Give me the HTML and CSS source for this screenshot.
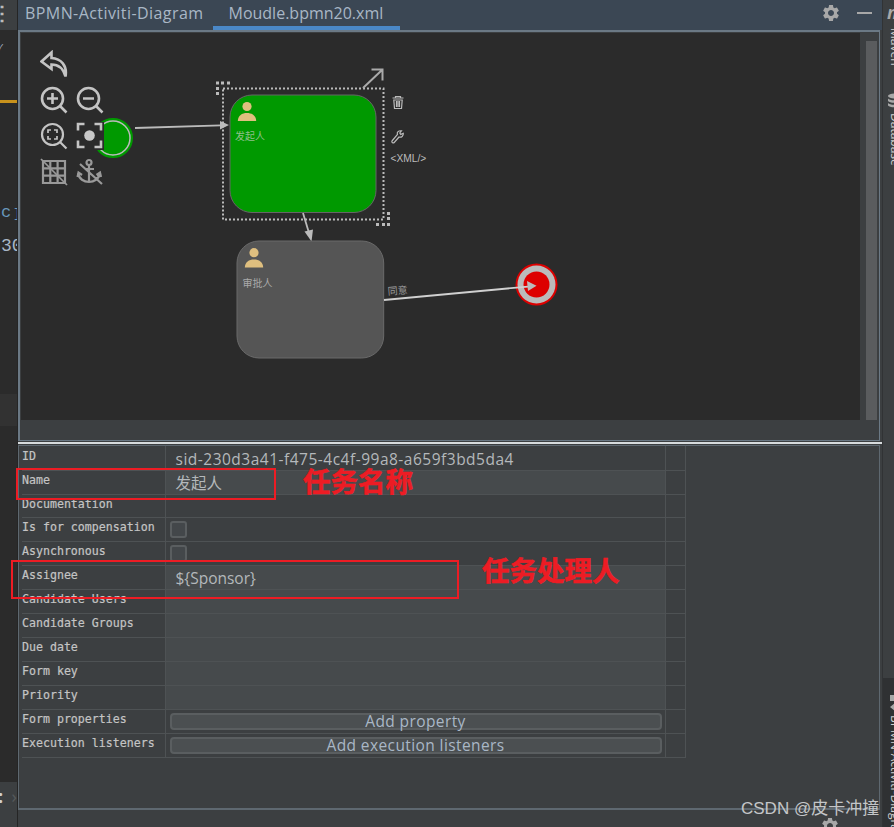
FILE: index.html
```html
<!DOCTYPE html>
<html lang="en">

<head>
    <meta charset="UTF-8">
    <meta name="viewport" content="width=device-width, initial-scale=1.0">
    <title>BPMN-Activiti-Diagram</title>
    <link rel="stylesheet" href="styles.css">
</head>

<body>
    <svg class="sprites" width="0" height="0">
        <symbol id="gear" viewBox="0 0 24 24">
            <path d="M19.14 12.94c.04-.3.06-.61.06-.94 0-.32-.02-.64-.07-.94l2.03-1.58c.18-.14.23-.41.12-.61l-1.92-3.32c-.12-.22-.37-.29-.59-.22l-2.39.96c-.5-.38-1.03-.7-1.62-.94L14.4 2.81c-.04-.24-.24-.41-.48-.41h-3.84c-.24 0-.43.17-.47.41L9.25 5.35c-.59.24-1.13.57-1.62.94l-2.39-.96c-.22-.08-.47 0-.59.22L2.74 8.87c-.12.21-.08.47.12.61l2.03 1.58c-.05.3-.09.63-.09.94s.02.64.07.94l-2.03 1.58c-.18.14-.23.41-.12.61l1.92 3.32c.12.22.37.29.59.22l2.39-.96c.5.38 1.03.7 1.62.94l.36 2.54c.05.24.24.41.48.41h3.84c.24 0 .44-.17.47-.41l.36-2.54c.59-.24 1.13-.56 1.62-.94l2.39.96c.22.08.47 0 .59-.22l1.92-3.32c.12-.22.07-.47-.12-.61l-2.01-1.58zM12 15.6c-1.98 0-3.6-1.62-3.6-3.6s1.62-3.6 3.6-3.6 3.6 1.62 3.6 3.6-1.62 3.6-3.6 3.6z" />
        </symbol>
    </svg>

    <div class="app">
        <!-- editor gutter behind the tool window -->
        <aside class="gutter">
            <div class="gutter-menu">⋮</div>
            <div class="gutter-check">✓</div>
            <div class="gutter-mark"></div>
            <div class="gutter-code gutter-c">c<span>]</span></div>
            <div class="gutter-code gutter-num">30</div>
            <div class="gutter-row"></div>
            <div class="gutter-foot"><b>:</b><i>›</i></div>
        </aside>

        <main class="tool-window">
            <div class="tabs">
                <div class="tab first">BPMN-Activiti-Diagram</div>
                <div class="tab active">Moudle.bpmn20.xml</div>
                <div class="tab-actions">
                    <svg class="gear" width="20" height="20"><use href="#gear" /></svg>
                    <span class="minimize"></span>
                </div>
            </div>

            <section class="canvas-panel">
                <div class="canvas-row">
                    <div class="canvas">
                        <svg class="diagram" viewBox="21 33 840 388" width="840" height="388">
                            <!-- start event -->
                            <circle cx="113" cy="138" r="19" fill="#009900" stroke="#009900" stroke-width="2" />
                            <circle cx="113" cy="138" r="17" fill="#009900" stroke="#bbbbbb" stroke-width="1.5" />
                            <path d="M135 128 L221 125.4" class="edge" />
                            <path d="M229 125 L220 121 L220 129.5 Z" class="head" />

                            <!-- first task -->
                            <rect x="230" y="95" width="146" height="117.5" rx="22" fill="#009900" stroke="#666666" />
                            <circle cx="247" cy="106.5" r="4.6" class="person" />
                            <path d="M237.8 121 C238 115.5 242 113 247 113 C252 113 256 115.5 256.2 121 Z" class="person" />
                            <text x="235" y="140" class="task-label on-green">发起人</text>

                            <!-- selection -->
                            <rect x="223" y="88.5" width="160.500" height="131" class="selection" />
                            <g class="handles">
                                <rect x="216" y="81.500" width="3" height="3" />
                                <rect x="221" y="81.500" width="3" height="3" />
                                <rect x="227" y="81.500" width="3" height="3" />
                                <rect x="216" y="87" width="3" height="3" />
                                <rect x="216" y="92" width="3" height="3" />
                                <rect x="387" y="212" width="3" height="3" />
                                <rect x="387" y="217" width="3" height="3" />
                                <rect x="387" y="223" width="3" height="3" />
                                <rect x="376" y="223" width="3" height="3" />
                                <rect x="382" y="223" width="3" height="3" />
                            </g>
                            <path d="M363 88 L382 70 M371.500 69.500 H382.500 V80.500" class="expand" />

                            <!-- trash -->
                            <g class="task-tool">
                                <path d="M392.500 98 H403.500 M395.500 98 V96.500 H400.500 V98 M393.800 100 L394.500 108.500 H401.500 L402.200 100 Z M396.500 101 V107 M398 101 V107 M399.500 101 V107" />
                            </g>
                            <!-- wrench -->
                            <g class="task-tool">
                                <path d="M392 141 L397.500 134.500 C396.500 132 398.500 130.500 401.500 130.800 L399.800 133 L400.800 134.400 L403.300 133.300 C403.500 136 401.500 137.700 399 137 L394 142.700 C393 143.500 391.200 142.200 392 141 Z" />
                            </g>
                            <text x="390.500" y="161.500" class="xml-label">&lt;XML/&gt;</text>

                            <path d="M303 213 L309 233" class="edge" />
                            <path d="M311.500 241.500 L304.500 231.500 L313 229.500 Z" class="head" />

                            <!-- second task -->
                            <rect x="237" y="241" width="146.700" height="117" rx="22" fill="#555555" stroke="#6a6a6a" />
                            <circle cx="254" cy="252.700" r="4.600" class="person" />
                            <path d="M244.800 267.500 C245 262 249 259.500 254 259.500 C259 259.500 263 262 263.200 267.500 Z" class="person" />
                            <text x="242.500" y="286.500" class="task-label">审批人</text>

                            <!-- end event -->
                            <circle cx="536.500" cy="284.500" r="21" fill="#dd0000" />
                            <circle cx="536.500" cy="284.500" r="19" fill="#bbbbbb" />
                            <circle cx="536.500" cy="284.500" r="13" fill="#dd0000" />
                            <path d="M384 300 L528 286.600" class="edge light" />
                            <path d="M536.500 285.800 L527 281 L528 291 Z" class="head" />
                            <text x="388" y="295" class="flow-label" transform="rotate(-5 388 295)">同意</text>
                        </svg>

                        <!-- diagram toolbar floats over the canvas -->
                        <div class="toolbar">
                            <svg class="tool" viewBox="0 0 28 28">
                                <path d="M11.500 2.500 L1.500 11.500 L11.500 19 V14.500 C18 14.500 23 17.500 25.500 26.500 C27.500 15.500 21 8.500 11.500 8 Z" />
                            </svg>
                            <span></span>
                            <svg class="tool" viewBox="0 0 28 28">
                                <circle cx="12.500" cy="12.500" r="10.500" />
                                <path d="M20 20 L26.500 26.500 M12.500 7 V18 M7 12.500 H18" />
                            </svg>
                            <svg class="tool" viewBox="0 0 28 28">
                                <circle cx="12.500" cy="12.500" r="10.500" />
                                <path d="M20 20 L26.500 26.500 M7 12.500 H18" />
                            </svg>
                            <svg class="tool" viewBox="0 0 28 28">
                                <circle class="mid" cx="12.500" cy="12.500" r="10.500" />
                                <path class="mid" d="M20 20 L26.500 26.500" />
                                <path class="thin" d="M8 11 V8 H11 M14 8 H17 V11 M17 14 V17 H14 M11 17 H8 V14" />
                            </svg>
                            <svg class="tool" viewBox="0 0 28 28">
                                <path d="M2 8.500 V2 H8.500 M18.500 2 H25 V8.500 M25 18.500 V25 H18.500 M8.500 25 H2 V18.500" />
                                <circle class="dot" cx="13.500" cy="13.500" r="5.300" />
                            </svg>
                            <svg class="tool tool-dim" viewBox="0 0 28 28">
                                <path class="mid" d="M3 3 H25 V25 H3 Z M3 10.300 H25 M3 17.600 H25 M10.300 3 V25 M17.600 3 V25" />
                                <path class="thin" d="M1 1 L27 27" />
                            </svg>
                            <svg class="tool tool-dim" viewBox="0 0 28 28">
                                <circle class="mid" cx="13" cy="4.500" r="2.500" />
                                <path class="mid" d="M13 7 V24 M8 11 H18 M2 15 C3 21 8 24 13 24 C18 24 23 21 24 15 M1.500 19 L2.500 14.500 L6 17 M20.500 17 L24 14.500 L25 19 M4 6 L26 26" />
                            </svg>
                        </div>
                    </div>
                    <div class="scrollbar"><div class="thumb"></div></div>
                </div>
                <div class="canvas-foot"></div>
            </section>

            <div class="divider"></div>

            <section class="props-panel">
                <table class="props">
                    <tr>
                        <th>ID</th>
                        <td class="value plain text id">sid-230d3a41-f475-4c4f-99a8-a659f3bd5da4</td>
                        <td class="tail"></td>
                    </tr>
                    <tr>
                        <th>Name</th>
                        <td class="value text">发起人</td>
                        <td class="tail"></td>
                    </tr>
                    <tr class="short">
                        <th>Documentation</th>
                        <td class="value plain"></td>
                        <td class="tail"></td>
                    </tr>
                    <tr>
                        <th>Is for compensation</th>
                        <td class="value plain"><span class="check"></span></td>
                        <td class="tail"></td>
                    </tr>
                    <tr>
                        <th>Asynchronous</th>
                        <td class="value plain"><span class="check"></span></td>
                        <td class="tail"></td>
                    </tr>
                    <tr>
                        <th>Assignee</th>
                        <td class="value text">${Sponsor}</td>
                        <td class="tail"></td>
                    </tr>
                    <tr>
                        <th>Candidate Users</th>
                        <td class="value"></td>
                        <td class="tail"></td>
                    </tr>
                    <tr>
                        <th>Candidate Groups</th>
                        <td class="value"></td>
                        <td class="tail"></td>
                    </tr>
                    <tr>
                        <th>Due date</th>
                        <td class="value"></td>
                        <td class="tail"></td>
                    </tr>
                    <tr>
                        <th>Form key</th>
                        <td class="value"></td>
                        <td class="tail"></td>
                    </tr>
                    <tr>
                        <th>Priority</th>
                        <td class="value"></td>
                        <td class="tail"></td>
                    </tr>
                    <tr>
                        <th>Form properties</th>
                        <td class="value plain"><button class="add-button">Add property</button></td>
                        <td class="tail"></td>
                    </tr>
                    <tr>
                        <th>Execution listeners</th>
                        <td class="value plain"><button class="add-button">Add execution listeners</button></td>
                        <td class="tail"></td>
                    </tr>
                </table>
            </section>

            <div class="footer">
                <svg class="gear" width="20" height="20"><use href="#gear" /></svg>
            </div>
        </main>

        <aside class="side-strip">
            <div class="side-top">
                <div class="side-m">m</div>
                <div class="side-text side-maven">Maven</div>
                <svg class="side-icon side-db" viewBox="0 0 16 16" width="16" height="16">
                    <ellipse cx="8" cy="3" rx="7" ry="2.500" />
                    <path d="M1 5.500 C3 8 13 8 15 5.500 V8 C13 10.500 3 10.500 1 8 Z M1 10 C3 12.500 13 12.500 15 10 V12.500 C13 15 3 15 1 12.500 Z" />
                </svg>
                <div class="side-text">Database</div>
            </div>
            <div class="side-bottom">
                <svg class="side-icon" viewBox="0 0 16 16" width="16" height="16">
                    <path d="M3 0 H13 V6 H3 Z M7 6 H9 V9 H7 Z M8 8 L13 12 L8 16 L3 12 Z" />
                </svg>
                <div class="side-text">BPMN-Activiti-Diagram</div>
            </div>
        </aside>

        <!-- hand drawn notes on top of the screenshot -->
        <div class="note-box note-box-name"></div>
        <div class="note-box note-box-assignee"></div>
        <div class="note note-name">任务名称</div>
        <div class="note note-assignee">任务处理人</div>
        <div class="watermark">CSDN @皮卡冲撞</div>
    </div>
</body>

</html>
```

FILE: styles.css
```css
* {
    margin: 0;
    padding: 0;
    box-sizing: border-box;
}

body {
    width: 894px;
    height: 827px;
    overflow: hidden;
    background: #3c3f41;
    color: #bbbbbb;
    font-family: 'Open Sans', 'Noto Sans CJK SC', sans-serif;
}

.sprites {
    position: absolute;
}

.app {
    position: relative;
    display: flex;
    width: 894px;
    height: 827px;
    overflow: hidden;
}

/* left gutter */
.gutter {
    width: 18px;
    flex: none;
    display: flex;
    flex-direction: column;
    overflow: hidden;
    background: #2b2b2b;
    border-right: 1px solid #252525;
}

.gutter-menu {
    height: 30px;
    flex: none;
    background: #3c3f41;
    color: #bbbbbb;
    font-size: 20px;
    font-weight: 700;
    line-height: 26px;
    text-indent: -8px;
}

.gutter-check {
    height: 14px;
    margin-top: 11px;
    font-size: 9px;
    line-height: 14px;
    margin-left: -3px;
    color: #a9b7c6;
    flex: none;
}

.gutter-mark {
    height: 3px;
    margin-top: 45px;
    background: #c8921c;
    flex: none;
}

.gutter-code {
    font-family: 'Liberation Mono', monospace;
    line-height: 20px;
    height: 20px;
    white-space: nowrap;
    flex: none;
}

.gutter-c {
    margin-top: 100px;
    padding-left: 1px;
    font-size: 17px;
    color: #6897bb;
}

.gutter-c span {
    font-size: 12px;
    margin-left: 2px;
}

.gutter-num {
    margin-top: 13px;
    padding-left: 1px;
    font-size: 18px;
    color: #a9b7c6;
}

.gutter-row {
    height: 32px;
    margin-top: 138px;
    flex: none;
    background: #323232;
}

.gutter-foot {
    margin-top: auto;
    height: 45px;
    flex: none;
    display: flex;
    justify-content: space-between;
    background: #3c3f41;
    padding-top: 4px;
    font-size: 18px;
    line-height: 20px;
}

.gutter-foot b {
    color: #d0d0d0;
    margin-left: -2px;
}

.gutter-foot i {
    font-style: normal;
    color: #55595b;
}

/* main tool window */
.tool-window {
    width: 864px;
    flex: none;
    display: flex;
    flex-direction: column;
}

.tabs {
    height: 30px;
    flex: none;
    display: flex;
    align-items: stretch;
    background: #3b4754;
}

.tab {
    padding: 0 15px 0 7px;
    font-size: 16px;
    line-height: 26px;
    color: #a9b7c6;
    white-space: nowrap;
}

.tab.first {
    letter-spacing: 0.43px;
    padding-right: 9px;
}

.tab.active {
    width: 187px;
    padding: 0 0 0 16px;
    border-bottom: 4px solid #4a88c7;
}

.tab-actions {
    margin-left: auto;
    display: flex;
    align-items: center;
    gap: 16px;
    padding: 0 10px 4px 0;
}

.gear {
    fill: #a8a8a8;
    display: block;
}

.minimize {
    width: 15px;
    height: 2px;
    background: #a8a8a8;
}

.canvas-panel {
    width: 862px;
    height: 411px;
    flex: none;
    display: flex;
    flex-direction: column;
    border: 1px solid #6b7985;
    border-left-width: 2px;
    border-top-width: 2px;
}

.canvas-row {
    height: 388px;
    flex: none;
    display: flex;
    padding-left: 1px;
    padding-top: 1px;
}

.canvas {
    position: relative;
    width: 840px;
    height: 387px;
    overflow: hidden;
    background: #2b2b2b;
}

.diagram {
    display: block;
}

.edge {
    fill: none;
    stroke: #bbbbbb;
    stroke-width: 1.8;
}

.edge.light {
    stroke: #d0d0d0;
}

.head {
    fill: #bbbbbb;
}

.person {
    fill: #dfbf7f;
}

.task-label {
    font-family: 'Noto Sans CJK SC', sans-serif;
    font-size: 10px;
    fill: #aaaaaa;
}

.task-label.on-green {
    fill: #8fc08a;
}

.flow-label {
    font-family: 'Noto Sans CJK SC', sans-serif;
    font-size: 10px;
    fill: #999999;
}

.xml-label {
    font-family: 'Liberation Sans', sans-serif;
    font-size: 10.2px;
    fill: #bbbbbb;
}

.selection {
    fill: none;
    stroke: #bbbbbb;
    stroke-width: 2;
    stroke-dasharray: 2 2;
}

.handles {
    fill: #bbbbbb;
}

.expand {
    fill: none;
    stroke: #aaaaaa;
    stroke-width: 2;
}

.task-tool path {
    fill: none;
    stroke: #bbbbbb;
    stroke-width: 1.2;
}

.toolbar {
    position: absolute;
    left: 19px;
    top: 17px;
    display: grid;
    grid-template-columns: 28px 28px;
    grid-auto-rows: 28px;
    gap: 8px;
}

.tool {
    display: block;
    width: 28px;
    height: 28px;
    background: #2b2b2b;
    fill: none;
    stroke: #c4c4c4;
    stroke-width: 2.6;
}

.tool .thin {
    stroke-width: 1.7;
}

.tool .mid {
    stroke-width: 2.2;
}

.tool .dot {
    fill: #c8c8c8;
    stroke: none;
}

.tool-dim {
    stroke: #999999;
}

.scrollbar {
    width: 19px;
    flex: none;
    padding: 8px 2px 0 6px;
    background: #3c3f41;
}

.thumb {
    width: 11px;
    height: 379px;
    background: #5a5c5e;
}

.canvas-foot {
    flex: 1;
    background: #3c3f41;
}

.divider {
    width: 864px;
    height: 2px;
    margin-top: 1px;
    flex: none;
    background: #d8dcde;
}

.props-panel {
    width: 862px;
    height: 365px;
    margin-top: 1px;
    flex: none;
    border: 1px solid #5e6870;
    border-bottom-width: 2px;
    padding: 0 0 0 3px;
}

.props {
    width: 664px;
    table-layout: fixed;
    border-collapse: collapse;
}

.props tr {
    height: 24px;
}

.props tr.short {
    height: 23px;
}

.props tr:last-child {
    border-bottom: 1px solid #4e5254;
}

.props th,
.props td {
    border: 1px solid #4e5254;
    overflow: visible;
    white-space: nowrap;
}

.props tr:first-child th,
.props tr:first-child td {
    border-top: none;
}

.props th {
    width: 143px;
    border-left: none;
    padding: 0 0 5px 0;
    font-family: 'DejaVu Sans Mono', monospace;
    font-size: 11.6px;
    font-weight: 400;
    line-height: 14px;
    text-align: left;
    vertical-align: middle;
    color: #c4c4c4;
    -webkit-text-stroke: 0.2px #c4c4c4;
}

.props tr:first-child th {
    padding-bottom: 4px;
}

.props tr.short th {
    padding-bottom: 3px;
}

.value {
    padding: 0 0 0 10px;
    font-size: 15.5px;
    line-height: 20px;
    background: #464a4c;
    color: #b4b8bb;
}

.value.plain {
    background: #3c3f41;
}

.value.text {
    padding-top: 2px;
}

.value.id {
    letter-spacing: 0.5px;
}

.tail {
    width: 20px;
    border-right: 1px solid #4e5254;
}

.check {
    display: block;
    width: 17px;
    height: 17px;
    margin: 0 0 0 -6px;
    border: 2px solid #5a5e60;
    border-radius: 3px;
    background: #43474a;
}

.add-button {
    display: block;
    width: 492px;
    height: 17px;
    margin-left: -6px;
    border: 2px solid #5a5e60;
    border-radius: 4px;
    background: #4b4f51;
    font-family: inherit;
    font-size: 15.5px;
    letter-spacing: 0.4px;
    line-height: 13px;
    color: #a9b7c6;
}

.footer {
    flex: 1;
    display: flex;
    justify-content: flex-end;
    padding: 6px 42px 0 0;
}

/* right strip with stacked tool buttons */
.side-strip {
    width: 12px;
    flex: none;
    display: flex;
    flex-direction: column;
    overflow: hidden;
    border-left: 1px solid #313335;
}

.side-top {
    height: 678px;
    flex: none;
    padding-left: 4px;
}

.side-bottom {
    flex: 1;
    background: #2f3133;
    padding: 17px 0 0 4px;
}

.side-m {
    height: 28px;
    font-size: 18px;
    font-style: italic;
    font-weight: 700;
    line-height: 24px;
    color: #a8a8a8;
}

.side-text {
    writing-mode: vertical-rl;
    font-size: 12px;
    line-height: 14px;
    margin-left: 1px;
    white-space: nowrap;
    color: #d0d0d0;
}

.side-maven {
    height: 40px;
    overflow: hidden;
}

.side-icon {
    display: block;
    fill: #a8a8a8;
    margin-bottom: 4px;
    flex: none;
}

.side-db {
    margin-top: 25px;
}

/* annotations */
.note-box {
    position: absolute;
    border: 2px solid #ed1c24;
}

.note-box-name {
    left: 16px;
    top: 468px;
    width: 260px;
    height: 32px;
}

.note-box-assignee {
    left: 11px;
    top: 560px;
    width: 448px;
    height: 39px;
}

.note {
    position: absolute;
    font-family: 'Noto Sans CJK SC', sans-serif;
    font-size: 27.5px;
    font-weight: 700;
    line-height: 32px;
    color: #ed1c24;
    -webkit-text-stroke: 0.6px #ed1c24;
    white-space: nowrap;
}

.note-name {
    left: 303px;
    top: 464px;
}

.note-assignee {
    left: 482px;
    top: 553px;
}

.watermark {
    position: absolute;
    left: 741px;
    top: 798px;
    font-family: 'Liberation Sans', 'Noto Sans CJK SC', sans-serif;
    font-size: 17px;
    line-height: 22px;
    color: #c4c6c8;
    white-space: nowrap;
}
```
